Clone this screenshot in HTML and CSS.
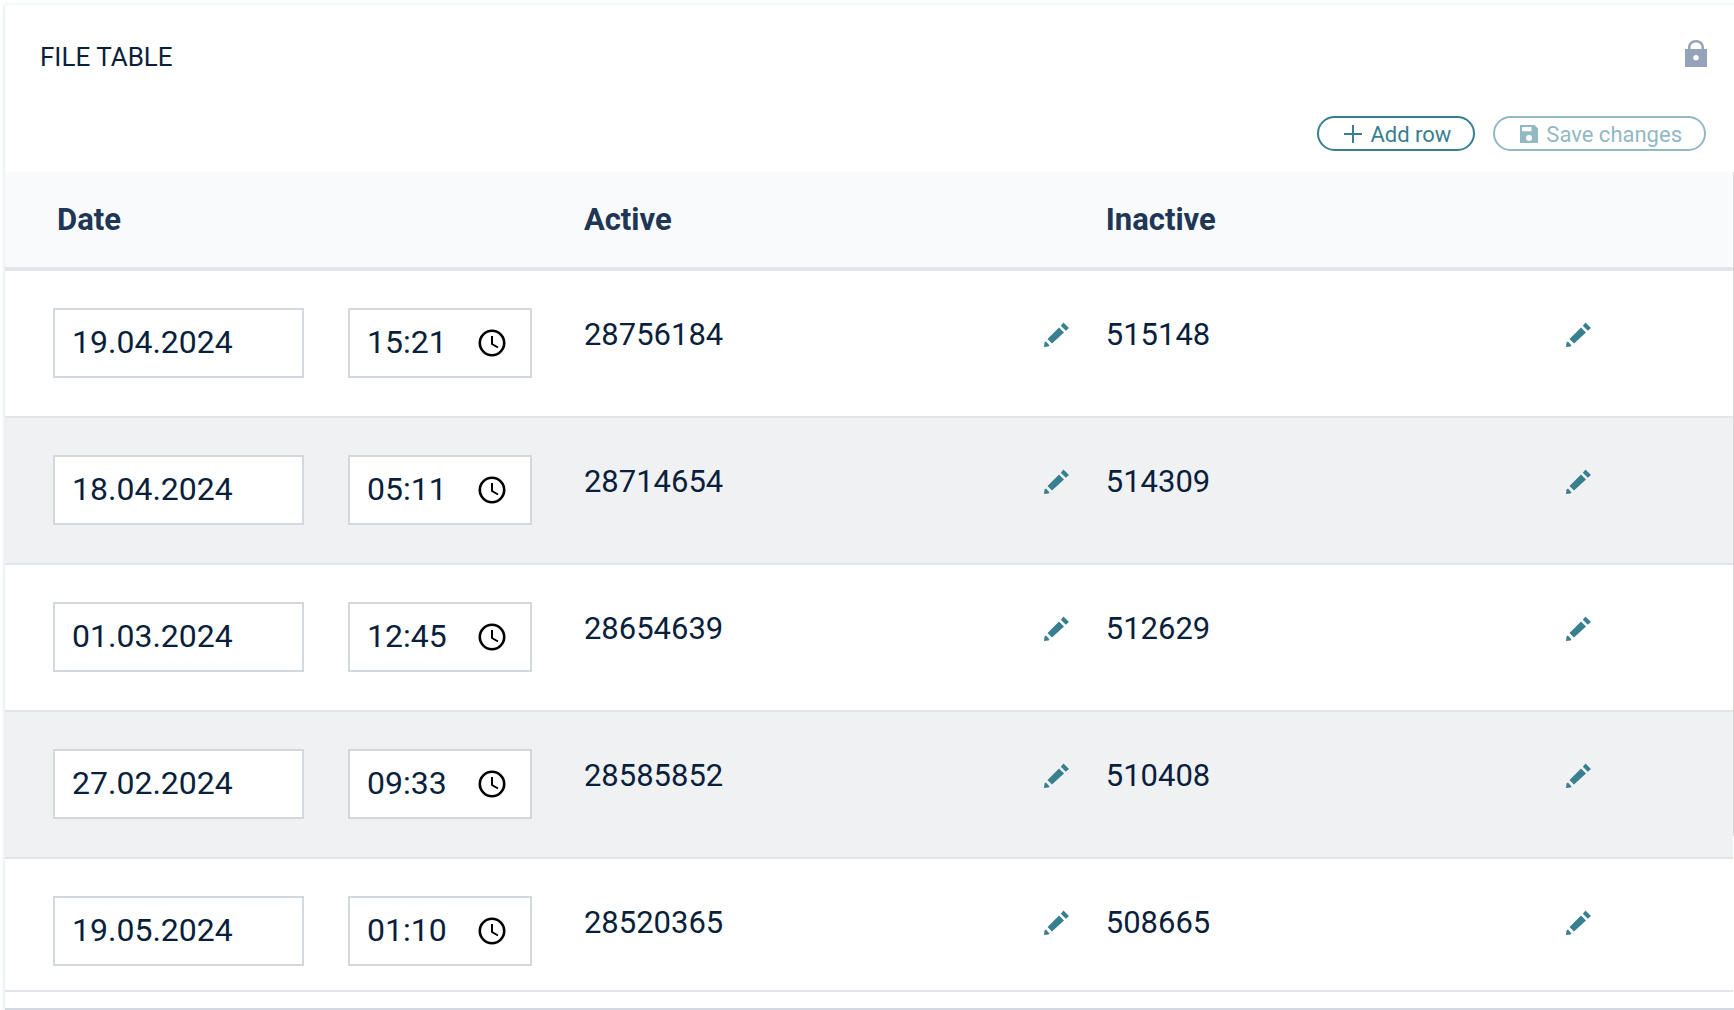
FILE: index.html
```
<!DOCTYPE html>
<html lang="en">
<head>
<meta charset="utf-8">
<title>File table</title>
<link rel="stylesheet" href="styles.css">
</head>
<body>
<svg class="sprite" aria-hidden="true">
  <symbol id="pencil" viewBox="0 0 25 25"><path d="M0 25L.5 20.500L2 19.500L5.500 23.500L4.500 24.500ZM3.500 17L15 5.500L20 10.500L8 21.500ZM16.800 3.700L19.500 .5L25 6L21.800 8.700Z"/></symbol>
  <symbol id="clock" viewBox="0 0 28 28"><circle cx="14" cy="14" r="12.200" fill="none" stroke="currentColor" stroke-width="2.600"/><path d="M14 7V15L20 18.500" fill="none" stroke="currentColor" stroke-width="2"/></symbol>
</svg>
<main class="card">
  <header class="card-header">
    <h1 class="title">FILE TABLE</h1>
    <button class="icon-button" type="button" aria-label="Lock table">
      <svg class="lock" width="22" height="27" viewBox="0 0 22 27"><path fill-rule="evenodd" d="M0 9H3V7.500C3 3 6.500 0 11 0S19 3 19 7.500V9H22V27H0ZM5.500 9H16.500V7.500C16.500 4.500 14 2.600 11 2.600S5.500 4.500 5.500 7.500ZM11 15A2.700 2.700 0 1 0 11 20.400A2.700 2.700 0 1 0 11 15Z"/></svg>
    </button>
  </header>
  <div class="toolbar">
    <button class="pill" type="button"><svg width="18" height="18" viewBox="0 0 18 18"><path d="M9 0V18M0 9H18" stroke="currentColor" stroke-width="2"/></svg><span>Add row</span></button>
    <button class="pill" type="button" disabled><svg width="18" height="18" viewBox="0 0 18 18"><path fill="currentColor" fill-rule="evenodd" d="M0 0H14.500L18 3.500V18H0ZM2 2V6.200H11.500V2ZM9 10A3 3 0 1 0 9 16A3 3 0 1 0 9 10Z"/></svg><span>Save changes</span></button>
  </div>
  <div class="table-area">
    <div class="table-scroll">
      <table>
        <colgroup><col class="col-date"><col class="col-value"><col class="col-value"><col></colgroup>
        <thead>
          <tr><th scope="col">Date</th><th scope="col">Active</th><th scope="col">Inactive</th><td></td></tr>
        </thead>
        <tbody>
          <tr>
            <td><div class="when"><input class="date" type="text" aria-label="Date" value="19.04.2024"><div class="time"><input type="text" aria-label="Time" value="15:21"><button class="icon-button" type="button" aria-label="Pick time"><svg width="28" height="28"><use href="#clock"/></svg></button></div></div></td>
            <td><div class="value">28756184<button class="icon-button edit" type="button" aria-label="Edit active"><svg width="25" height="25"><use href="#pencil"/></svg></button></div></td>
            <td><div class="value">515148<button class="icon-button edit" type="button" aria-label="Edit inactive"><svg width="25" height="25"><use href="#pencil"/></svg></button></div></td>
            <td></td>
          </tr>
          <tr>
            <td><div class="when"><input class="date" type="text" aria-label="Date" value="18.04.2024"><div class="time"><input type="text" aria-label="Time" value="05:11"><button class="icon-button" type="button" aria-label="Pick time"><svg width="28" height="28"><use href="#clock"/></svg></button></div></div></td>
            <td><div class="value">28714654<button class="icon-button edit" type="button" aria-label="Edit active"><svg width="25" height="25"><use href="#pencil"/></svg></button></div></td>
            <td><div class="value">514309<button class="icon-button edit" type="button" aria-label="Edit inactive"><svg width="25" height="25"><use href="#pencil"/></svg></button></div></td>
            <td></td>
          </tr>
          <tr>
            <td><div class="when"><input class="date" type="text" aria-label="Date" value="01.03.2024"><div class="time"><input type="text" aria-label="Time" value="12:45"><button class="icon-button" type="button" aria-label="Pick time"><svg width="28" height="28"><use href="#clock"/></svg></button></div></div></td>
            <td><div class="value">28654639<button class="icon-button edit" type="button" aria-label="Edit active"><svg width="25" height="25"><use href="#pencil"/></svg></button></div></td>
            <td><div class="value">512629<button class="icon-button edit" type="button" aria-label="Edit inactive"><svg width="25" height="25"><use href="#pencil"/></svg></button></div></td>
            <td></td>
          </tr>
          <tr>
            <td><div class="when"><input class="date" type="text" aria-label="Date" value="27.02.2024"><div class="time"><input type="text" aria-label="Time" value="09:33"><button class="icon-button" type="button" aria-label="Pick time"><svg width="28" height="28"><use href="#clock"/></svg></button></div></div></td>
            <td><div class="value">28585852<button class="icon-button edit" type="button" aria-label="Edit active"><svg width="25" height="25"><use href="#pencil"/></svg></button></div></td>
            <td><div class="value">510408<button class="icon-button edit" type="button" aria-label="Edit inactive"><svg width="25" height="25"><use href="#pencil"/></svg></button></div></td>
            <td></td>
          </tr>
          <tr>
            <td><div class="when"><input class="date" type="text" aria-label="Date" value="19.05.2024"><div class="time"><input type="text" aria-label="Time" value="01:10"><button class="icon-button" type="button" aria-label="Pick time"><svg width="28" height="28"><use href="#clock"/></svg></button></div></div></td>
            <td><div class="value">28520365<button class="icon-button edit" type="button" aria-label="Edit active"><svg width="25" height="25"><use href="#pencil"/></svg></button></div></td>
            <td><div class="value">508665<button class="icon-button edit" type="button" aria-label="Edit inactive"><svg width="25" height="25"><use href="#pencil"/></svg></button></div></td>
            <td></td>
          </tr>
        </tbody>
      </table>
    </div>
  </div>
</main>
</body>
</html>
```
FILE: styles.css
```
* { box-sizing: border-box; }

body {
  margin: 0;
  height: 100vh;
  padding: 5px 0 2px 5px;
  overflow: hidden;
  background: #fdfefe;
  color: #0a1f3c;
  font-family: Roboto, "Liberation Sans", sans-serif;
}

button, input { font: inherit; color: inherit; }

.sprite { display: none; }

.card {
  display: flex;
  flex-direction: column;
  height: 100%;
  padding-bottom: 16px;
  background: #fff;
  box-shadow: 0 2px 0 #d3d9df, 0 1px 3px 1px #e3e8ec;
}

.card-header {
  display: flex;
  justify-content: space-between;
  align-items: flex-start;
  padding: 35px 27px 0 35px;
  height: 111px;
}

.title {
  margin: 0;
  font-size: 26px;
  line-height: 34px;
  font-weight: 400;
}

.icon-button {
  display: block;
  padding: 0;
  border: 0;
  background: none;
}

.icon-button svg { display: block; }

.lock { fill: #94a3b8; }

.toolbar {
  display: flex;
  justify-content: flex-end;
  gap: 18px;
  padding: 0 28px 21px 0;
}

.pill {
  display: flex;
  align-items: center;
  gap: 8px;
  height: 35px;
  padding: 0 22px 0 25px;
  border: 2px solid #38808f;
  border-radius: 18px;
  background: #fff;
  color: #38808f;
  font-size: 22px;
  line-height: 29px;
}

.pill span { padding-top: 2px; }

.pill:disabled {
  border-color: #92b9c2;
  color: #92b9c2;
}

.table-area {
  position: relative;
  flex: 1;
  min-height: 0;
  padding-right: 1px;
}

/* Scroll thumb along the right edge */
.table-area::after {
  content: "";
  position: absolute;
  top: 0;
  right: 0;
  width: 1px;
  height: 81%;
  background: #d6d6d6;
}

.table-scroll {
  height: 100%;
  overflow-y: auto;
  scrollbar-width: none;
  border-bottom: 2px solid #e1e5ea;
}

table {
  width: 100%;
  table-layout: fixed;
  border-collapse: separate;
  border-spacing: 0;
  font-size: 31px;
}

.col-date { width: 33.5%; }
.col-value { width: 30.2%; }

td, th { padding: 0; text-align: left; }

thead th, thead td {
  height: 99px;
  border-bottom: 4px solid #e1e5ea;
  background: #f9fafc;
  color: #203655;
  font-weight: 700;
}

thead th:first-child { padding-left: 52px; }

tbody td {
  height: 147px;
  border-bottom: 2px solid #e1e5ea;
  vertical-align: top;
}

tbody tr:nth-child(even) { background: #f0f1f3; }

.when {
  display: flex;
  gap: 44px;
  padding: 37px 0 0 48px;
  font-size: 32px;
}

.date, .time {
  height: 70px;
  border: 2px solid #d3d8df;
  border-radius: 0;
  background: #fff;
}

.date { width: 251px; padding: 0 17px 2px; }

.time {
  display: flex;
  align-items: center;
  width: 184px;
  padding: 0 24px 0 17px;
}

.time input {
  flex: 1;
  min-width: 0;
  padding: 0 0 2px;
  border: 0;
  background: none;
}

.time .icon-button { color: #000; }

.value {
  display: flex;
  justify-content: space-between;
  align-items: center;
  padding: 44px 37px 0 0;
  line-height: 40px;
}

.edit {
  padding-bottom: 2px;
  fill: #38808f;
}
```
